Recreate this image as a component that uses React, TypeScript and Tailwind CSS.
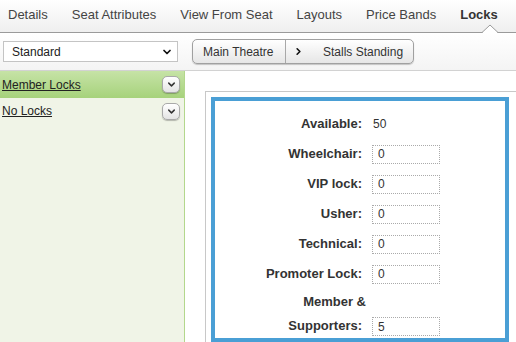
import { ChevronDown, ChevronRight } from 'lucide-react';

const TABS = ['Details', 'Seat Attributes', 'View From Seat', 'Layouts', 'Price Bands', 'Locks'];

const ROWS: { label: string; value: string; input: boolean }[] = [
  { label: 'Available:', value: '50', input: false },
  { label: 'Wheelchair:', value: '0', input: true },
  { label: 'VIP lock:', value: '0', input: true },
  { label: 'Usher:', value: '0', input: true },
  { label: 'Technical:', value: '0', input: true },
  { label: 'Promoter Lock:', value: '0', input: true },
];

function SmallToggle() {
  return (
    <div className="flex h-[17px] w-[18px] items-center justify-center rounded-[5px] border border-[#a9a9a9] bg-gradient-to-b from-white to-[#e4e4e4] shadow-[0_1px_1px_rgba(0,0,0,0.25)]">
      <ChevronDown size={11} strokeWidth={3.2} className="text-[#333]" />
    </div>
  );
}

export default function App() {
  return (
    <div className="relative h-[342px] w-[516px] overflow-hidden bg-white font-['Liberation_Sans',Arial,sans-serif] text-[#333]">
      {/* tabs */}
      <div className="relative flex h-[33px] items-center gap-[24px] border-b border-[#9a9a9a] bg-gradient-to-b from-white to-[#efefef] pb-[2px] pl-[8px] text-[13px] text-[#444]">
        {TABS.map((t) => (
          <span key={t} className={t === 'Locks' ? 'font-bold text-[#333]' : ''}>
            {t}
          </span>
        ))}
        <svg className="absolute bottom-[-1px] left-[482px]" width="16" height="9" viewBox="0 0 16 9">
          <path d="M0 8.5 L8 1 L16 8.5" fill="white" stroke="#9a9a9a" strokeWidth="1" />
          <rect x="1" y="8" width="14" height="1" fill="white" />
        </svg>
      </div>

      {/* toolbar */}
      <div className="flex h-[38px] items-center border-b border-[#d2d2d2] bg-gradient-to-b from-white to-[#f4f4f4] pl-[3px]">
        <div className="flex h-[21px] w-[175px] items-center justify-between border border-[#c4c4c4] bg-white pl-[8px] pr-[4px] text-[12px] text-[#222]">
          <span>Standard</span>
          <ChevronDown size={12} strokeWidth={3.5} className="text-[#111]" />
        </div>
        <div className="ml-[14px] flex h-[25px] w-[222px] items-stretch rounded-[5px] border border-[#a0a0a0] bg-gradient-to-b from-white to-[#e6e6e6] text-[12px] text-[#333] shadow-[0_1px_1px_rgba(0,0,0,0.2)]">
          <div className="flex w-[93px] items-center border-r border-[#a8a8a8] pl-[10px]">Main Theatre</div>
          <div className="flex flex-1 items-center pl-[7px]">
            <ChevronRight size={11} strokeWidth={3.5} className="text-[#111]" />
            <span className="ml-[19px]">Stalls Standing</span>
          </div>
        </div>
      </div>

      <div className="flex h-[271px]">
        {/* left panel */}
        <div className="w-[185px] shrink-0 border-r border-[#b3d78c] bg-[#f0f4e7] text-[12px] text-[#222]">
          <div className="flex h-[27px] items-center justify-between bg-gradient-to-b from-[#c6e3a6] to-[#a6d27b] pl-[2px] pr-[4px]">
            <span className="underline">Member Locks</span>
            <SmallToggle />
          </div>
          <div className="flex h-[26px] items-center justify-between pl-[2px] pr-[4px]">
            <span className="underline">No Locks</span>
            <SmallToggle />
          </div>
        </div>

        {/* right content */}
        <div className="flex-1 overflow-hidden pl-[20px] pt-[20px]">
          <div className="w-[330px] border border-r-0 border-[#c8c8c8] pl-[5px] pt-[5px]">
            <div className="w-[298px] border-[4px] border-b-0 border-[#4a9fd5] pt-[8px]">
              {ROWS.map((r) => (
                <div key={r.label} className="flex h-[30px] items-center">
                  <div className="w-[147px] text-right text-[13px] font-bold">{r.label}</div>
                  {r.input ? (
                    <div className="ml-[10px] flex h-[19px] w-[68px] items-center border border-dotted border-[#aaa] pl-[5px] text-[12px] text-[#333]">
                      {r.value}
                    </div>
                  ) : (
                    <div className="ml-[10px] pl-[1px] text-[12px] text-[#333]">{r.value}</div>
                  )}
                </div>
              ))}
              <div className="flex h-[53px] items-end border-b-[4px] border-[#4a9fd5]">
                <div className="w-[147px] text-right text-[13px] font-bold leading-[24px]">
                  <div className="-mr-[4px]">Member &amp;</div>
                  <div>Supporters:</div>
                </div>
                <div className="mb-[2px] ml-[10px] flex h-[19px] w-[68px] items-center border border-dotted border-[#aaa] pl-[5px] text-[12px] text-[#333]">
                  5
                </div>
              </div>
            </div>
          </div>
        </div>
      </div>
    </div>
  );
}
